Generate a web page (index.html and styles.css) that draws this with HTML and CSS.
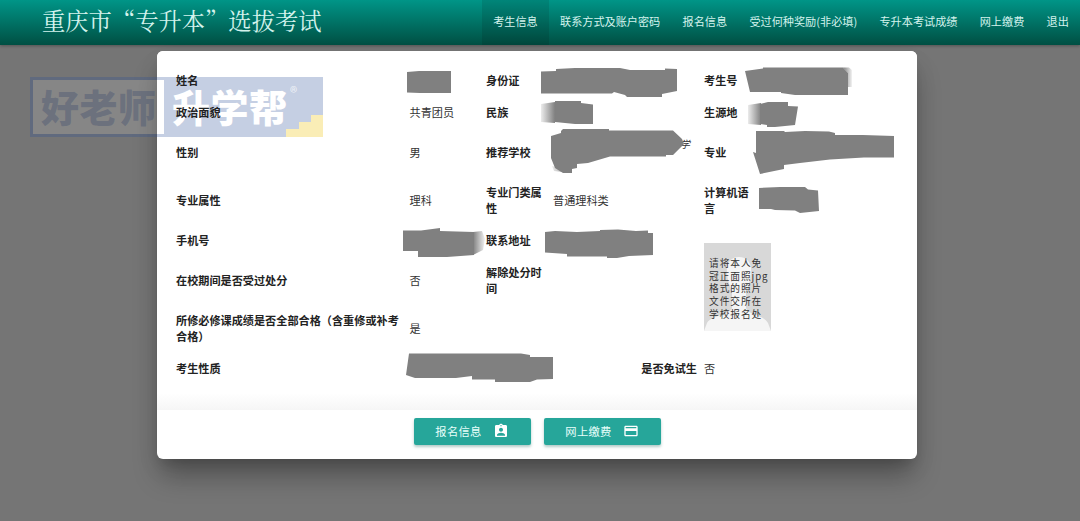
FILE: index.html
```html
<!DOCTYPE html>
<html lang="zh-CN">
<head>
<meta charset="utf-8">
<title>重庆市“专升本”选拔考试</title>
<link rel="stylesheet" href="styles.css">
</head>
<body>
<header class="topbar">
  <h1 class="brand">重庆市“专升本”选拔考试</h1>
  <nav class="nav">
    <a class="nav-item active">考生信息</a>
    <a class="nav-item">联系方式及账户密码</a>
    <a class="nav-item">报名信息</a>
    <a class="nav-item">受过何种奖励(非必填)</a>
    <a class="nav-item">专升本考试成绩</a>
    <a class="nav-item">网上缴费</a>
    <a class="nav-item">退出</a>
  </nav>
</header>
<main class="modal">
  <section class="content">
    <div class="info">
      <b>姓名</b><span></span><b>身份证</b><span></span><b>考生号</b><span></span>
      <b>政治面貌</b><span>共青团员</span><b>民族</b><span></span><b>生源地</b><span></span>
      <b>性别</b><span>男</span><b>推荐学校</b><span class="school-end">学</span><b>专业</b><span></span>
      <b>专业属性</b><span>理科</span><b>专业门类属性</b><span>普通理科类</span><b>计算机语言</b><span></span>
      <b>手机号</b><span></span><b>联系地址</b><span></span>
      <div class="photo">
        <svg class="person" viewBox="0 0 67 88"><path d="M35 14C44 14 48 21 47 30C46 42 42 46 42 51V65C44 72 60 72 64 80L67 88H0L3 80C8 72 26 72 28 65V51C28 46 24 42 23 30C22 21 26 14 35 14z"/></svg>
        <p class="photo-text">请将本人免<br>冠正面照jpg<br>格式的照片<br>文件交所在<br>学校报名处</p>
      </div>
      <b>在校期间是否受过处分</b><span>否</span><b>解除处分时间</b><span></span>
      <b>所修必修课成绩是否全部合格（含重修或补考合格）</b><span>是</span><b></b><span></span>
      <b>考生性质</b><span></span><b class="exempt">是否免试生</b><span>否</span>
    </div>
  </section>
  <footer class="actions">
    <button class="btn">报名信息<svg class="icon" viewBox="0 0 24 24"><path d="M19 3h-4.18C14.4 1.84 13.3 1 12 1s-2.4.84-2.82 2H5c-1.1 0-2 .9-2 2v14c0 1.1.9 2 2 2h14c1.1 0 2-.9 2-2V5c0-1.1-.9-2-2-2zm-7 0c.55 0 1 .45 1 1s-.45 1-1 1-1-.45-1-1 .45-1 1-1zm0 4c1.66 0 3 1.34 3 3s-1.34 3-3 3-3-1.34-3-3 1.34-3 3-3zm6 12H6v-1.4c0-2 4-3.1 6-3.1s6 1.1 6 3.1V19z"/></svg></button>
    <button class="btn">网上缴费<svg class="icon" viewBox="0 0 24 24"><path d="M20 4H4c-1.11 0-1.99.89-1.99 2L2 18c0 1.11.89 2 2 2h16c1.11 0 2-.89 2-2V6c0-1.11-.89-2-2-2zm0 14H4v-6h16v6zm0-10H4V6h16v2z"/></svg></button>
  </footer>
</main>

<svg class="watermark" viewBox="0 0 300 66">
  <path class="wm-blue" fill-rule="evenodd" d="M3 3H296V63H3zM6 6V60H137V6zM259 63H296V41H284V48H272V55H259z"/>
  <path class="wm-light" d="M6 6H137V60H6z"/>
  <path class="wm-yellow" d="M296 41V63H259V55H272V48H284V41z"/>
  <text class="wm-ink wm-text" x="14" y="48" textLength="115">好老师</text>
  <text class="wm-white wm-text" x="145" y="48" textLength="115">升学帮</text>
  <text class="wm-white wm-reg" x="263" y="24">®</text>
</svg>

<svg class="redactions" viewBox="0 0 1080 521">
  <defs>
    <linearGradient id="fade-in"><stop offset="0" stop-color="#808080" stop-opacity=".15"/><stop offset="1" stop-color="#808080"/></linearGradient>
    <linearGradient id="fade-out"><stop offset="0" stop-color="#808080"/><stop offset="1" stop-color="#808080" stop-opacity=".1"/></linearGradient>
  </defs>
  <path d="M407 72L419 71H451V93H420L407 92.500z"/>
  <path d="M541 71.500L556 71V69L575 68H620L630 70H665V68.500L677 69V91L662 94V97H627L625 95L614 92L612 93.500H541z"/>
  <path d="M745 71L763 68.500V67.500H843L848 73V95H795L781 93V92H750z"/>
  <path fill="url(#fade-out)" d="M843 67.500H849L852 70V87H848V73z"/>
  <path d="M555 103V101H581V103L593 104.500V124H575L555 122z"/>
  <path fill="url(#fade-in)" d="M541 104L555 102V123L541 122z"/>
  <path d="M760 104L768 102H788V106L798 106.500L795 125L775 127H767V125L760 124z"/>
  <path fill="url(#fade-in)" d="M748 105L761 103V125L748 124z"/>
  <path d="M551 136L561 133V131L563 129H609V130.500H673L682 139L684 144L673 155H666V156.500H610L588 163L577 164V168L572 169V173H563L555 168L551 158z"/>
  <path fill="url(#fade-in)" d="M552 166L560 168L571 173L554 171z"/>
  <path d="M756 131H784L785 132L805 131L829 131.500L835 133V135H863L894 136V157.500H864L830 159.500L800 163L784 165V169L760 174L753 152L756 153z"/>
  <path d="M759 188L780 187H805L808 189.500L818 190.500L819 211L800 213L795 210.500L775 210L771 209L759 209z"/>
  <path d="M403 230.500H421L440 228V231L474 232V255L447 257H418V251H403z"/>
  <path fill="url(#fade-out)" d="M473 232L482 231L485 239L483 250L473 255z"/>
  <path d="M545 232L555 231L577 232L600 231V230L618 229.500L636 231L648 230.500V233H653V255L629 256L617 258H607V256.500H567V254L545 252.500z"/>
  <path d="M409 353.500H521L530 355V357H553V379L537 379.500L530 382H495V379.500H472V376L456 378H415L406 375z"/>
</svg>
</body>
</html>
```
FILE: styles.css
```css
* { box-sizing: border-box; }

body {
  margin: 0;
  width: 1080px;
  height: 521px;
  overflow: hidden;
  background: #757575;
  font-family: "Noto Sans CJK SC", sans-serif;
  font-size: 11.15px;
  line-height: 16px;
  color: #333;
}

.topbar {
  display: flex;
  justify-content: space-between;
  height: 45px;
  padding-left: 42px;
  background: linear-gradient(#009587, #004f43);
  box-shadow: 0 1px 3px rgba(0, 0, 0, .3);
  color: #d4f3ed;
}

.brand {
  margin: 0;
  font-family: "Noto Serif CJK SC", "Noto Sans CJK SC", sans-serif;
  font-size: 23.3px;
  font-weight: 400;
  line-height: 41px;
  white-space: nowrap;
}

.nav { display: flex; line-height: 43px; }
.nav-item { padding: 0 11.15px; white-space: nowrap; }
.nav-item.active { background: rgba(0, 0, 0, .1); }

.modal {
  width: 760px;
  height: 408px;
  margin: 6px 0 0 157px;
  border-radius: 6px;
  background: #fff;
  box-shadow: 0 20px 28px -4px rgba(0, 0, 0, .3), 0 10px 24px rgba(0, 0, 0, .06), 0 8px 12px -5px rgba(0, 0, 0, .12);
}

.content {
  height: 359px;
  padding: 13px 19px 0;
  border-radius: 6px 6px 0 0;
  background: linear-gradient(#fff 342px, #f6f6f6 359px);
}

.info {
  position: relative;
  z-index: 2;
  display: grid;
  grid-template-columns: 233.5px 76.5px 67px 151px 56px 1fr;
  grid-template-rows: 32px 32px 47px 50px 30px 50px 46px 34px;
  align-items: center;
}
.info b { padding-right: 8px; color: #222; }
.info b:nth-child(6n + 1) { padding-right: 5px; }

.school-end { padding-left: 127px; line-height: 32px; margin-top: -16px; font-size: 10px; font-style: italic; }
.info .exempt { grid-column: 3 / 5; justify-self: end; padding-right: 7px; }

.photo {
  grid-column: 5 / 7;
  grid-row: 5 / 8;
  align-self: start;
  display: grid;
  width: 67px;
  height: 88px;
  margin-top: 18px;
  background: #d8d8d8;
}
.person { grid-area: 1 / 1; width: 67px; height: 88px; fill: #f5f5f5; }
.photo-text {
  grid-area: 1 / 1;
  margin: 14px 0 0 5px;
  font-size: 9.7px;
  letter-spacing: .95px;
  line-height: 12.7px;
  white-space: nowrap;
}

.actions {
  display: flex;
  justify-content: center;
  gap: 13px;
  padding-top: 8px;
}
.btn {
  display: flex;
  align-items: center;
  justify-content: center;
  gap: 11px;
  width: 117px;
  height: 27px;
  padding: 0 0 1px;
  border: 0;
  border-radius: 2px;
  background: #26a69a;
  box-shadow: 0 2px 3px rgba(0, 80, 70, .3);
  color: #e8fffb;
  font: 11.3px "Noto Sans CJK SC", sans-serif;
  letter-spacing: .3px;
}
.icon { width: 16px; height: 16px; margin-top: -1px; fill: #fff; }

.watermark {
  position: absolute;
  z-index: 1;
  left: 27px;
  top: 74px;
  width: 300px;
  height: 66px;
}
.wm-blue { fill: rgba(40, 77, 150, .27); }
.wm-ink { fill: rgba(60, 75, 110, .36); }
.wm-light { fill: rgba(255, 255, 255, .13); }
.wm-yellow { fill: #faedb6; }
.wm-white { fill: #fff; }
.wm-text { font-size: 38px; font-weight: 900; }
.wm-reg { font-size: 15px; opacity: .7; }

.redactions {
  position: absolute;
  z-index: 3;
  left: 0;
  top: 0;
  width: 1080px;
  height: 521px;
  fill: #808080;
}
```
